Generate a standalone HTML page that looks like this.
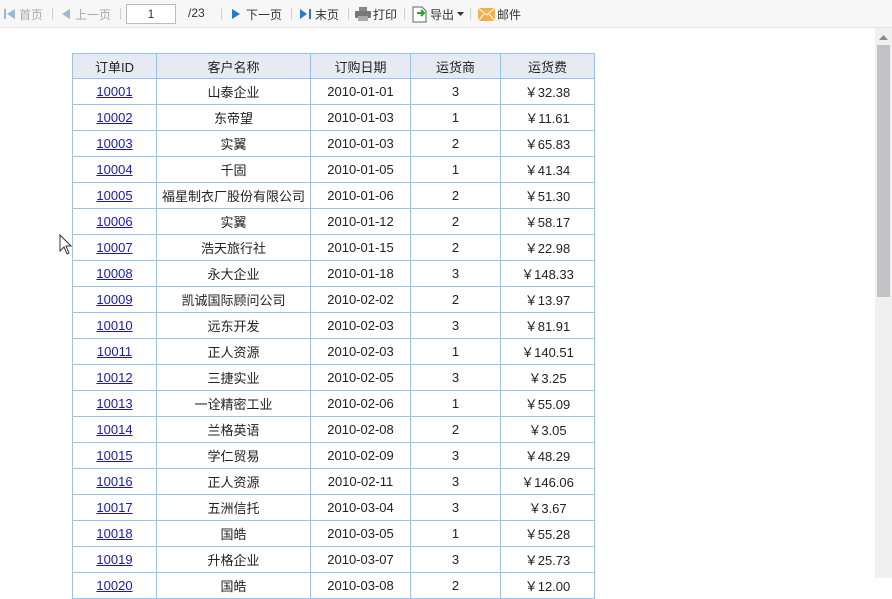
<!DOCTYPE html>
<html><head><meta charset="utf-8"><style>
*{margin:0;padding:0;box-sizing:border-box}
body{width:892px;height:578px;overflow:hidden;background:#fff;font-family:"Liberation Sans","Noto Sans CJK SC",sans-serif;position:relative}
#tb{position:absolute;left:0;top:0;width:892px;height:28px;background:#f7f7f7;border-bottom:1px solid #e3e3e3;font-size:12px;color:#333}
#tb span{position:absolute;top:6px;white-space:nowrap}
.g{color:#aaa}
.sep{color:#ccc}
#pg{position:absolute;left:126px;top:4px;width:50px;height:20px;border:1px solid #bbb;background:#fff;font-size:12px;text-align:center;line-height:18px}
table{position:absolute;left:72px;top:53px;border-collapse:collapse;font-size:13px;color:#222}
td{border:1px solid #9cc2ea;text-align:center;height:26px;padding:0}
tr.h td{background:#e6ebf3;height:25px}
a{color:#1a1aa8;text-decoration:underline}
#sb{position:absolute;left:875px;top:28px;width:17px;height:550px;background:#f0f0f0}
#th{position:absolute;left:877px;top:45px;width:13px;height:252px;background:#c1c1c6}
</style></head><body>
<div id="tb">
<svg style="position:absolute;left:4px;top:8px" width="12" height="12"><rect x="0" y="1" width="2" height="10" fill="#9bb8d8"/><path d="M11 1L3 6L11 11Z" fill="#9bb8d8"/></svg>
<span class="g" style="left:19px">首页</span><span class="sep" style="left:51px">|</span>
<svg style="position:absolute;left:61px;top:8px" width="10" height="12"><path d="M9 1L1 6L9 11Z" fill="#9bb8d8"/></svg>
<span class="g" style="left:75px">上一页</span><span class="sep" style="left:119px">|</span>
<div id="pg">1</div>
<span style="left:188px">/23</span><span class="sep" style="left:220px">|</span>
<svg style="position:absolute;left:231px;top:8px" width="10" height="12"><path d="M1 1L9 6L1 11Z" fill="#2a78c9"/></svg>
<span style="left:246px">下一页</span><span class="sep" style="left:290px">|</span>
<svg style="position:absolute;left:299px;top:8px" width="13" height="12"><path d="M1 1L8 6L1 11Z" fill="#2a78c9"/><rect x="10" y="1" width="2" height="10" fill="#2a78c9"/></svg>
<span style="left:315px">末页</span><span class="sep" style="left:347px">|</span>
<svg style="position:absolute;left:355px;top:7px" width="16" height="14"><rect x="4" y="0" width="8" height="4" fill="#888"/><rect x="0" y="4" width="16" height="7" rx="1" fill="#777"/><rect x="3" y="9" width="10" height="5" fill="#aaa"/></svg>
<span style="left:373px">打印</span><span class="sep" style="left:403px">|</span>
<svg style="position:absolute;left:412px;top:6px" width="16" height="17"><path d="M1 1H10L14 5V16H1Z" fill="#fff" stroke="#666"/><path d="M5 7H11M9 4L12 7L9 10" stroke="#2a2" stroke-width="2" fill="none"/></svg>
<span style="left:430px">导出</span>
<svg style="position:absolute;left:457px;top:12px" width="7" height="4"><path d="M0 0H7L3.5 4Z" fill="#333"/></svg>
<span class="sep" style="left:469px">|</span>
<svg style="position:absolute;left:478px;top:8px" width="17" height="13"><rect width="17" height="13" fill="#f0b050"/><path d="M0 0L8.5 7L17 0M0 13L6 6M17 13L11 6" stroke="#fff" fill="none"/></svg>
<span style="left:497px">邮件</span>
</div>
<table>
<colgroup><col style="width:84px"><col style="width:154px"><col style="width:100px"><col style="width:90px"><col style="width:94px"></colgroup>
<tr class="h"><td>订单ID</td><td>客户名称</td><td>订购日期</td><td>运货商</td><td>运货费</td></tr>
<tr><td><a>10001</a></td><td>山泰企业</td><td>2010-01-01</td><td>3</td><td>￥32.38</td></tr>
<tr><td><a>10002</a></td><td>东帝望</td><td>2010-01-03</td><td>1</td><td>￥11.61</td></tr>
<tr><td><a>10003</a></td><td>实翼</td><td>2010-01-03</td><td>2</td><td>￥65.83</td></tr>
<tr><td><a>10004</a></td><td>千固</td><td>2010-01-05</td><td>1</td><td>￥41.34</td></tr>
<tr><td><a>10005</a></td><td>福星制衣厂股份有限公司</td><td>2010-01-06</td><td>2</td><td>￥51.30</td></tr>
<tr><td><a>10006</a></td><td>实翼</td><td>2010-01-12</td><td>2</td><td>￥58.17</td></tr>
<tr><td><a>10007</a></td><td>浩天旅行社</td><td>2010-01-15</td><td>2</td><td>￥22.98</td></tr>
<tr><td><a>10008</a></td><td>永大企业</td><td>2010-01-18</td><td>3</td><td>￥148.33</td></tr>
<tr><td><a>10009</a></td><td>凯诚国际顾问公司</td><td>2010-02-02</td><td>2</td><td>￥13.97</td></tr>
<tr><td><a>10010</a></td><td>远东开发</td><td>2010-02-03</td><td>3</td><td>￥81.91</td></tr>
<tr><td><a>10011</a></td><td>正人资源</td><td>2010-02-03</td><td>1</td><td>￥140.51</td></tr>
<tr><td><a>10012</a></td><td>三捷实业</td><td>2010-02-05</td><td>3</td><td>￥3.25</td></tr>
<tr><td><a>10013</a></td><td>一诠精密工业</td><td>2010-02-06</td><td>1</td><td>￥55.09</td></tr>
<tr><td><a>10014</a></td><td>兰格英语</td><td>2010-02-08</td><td>2</td><td>￥3.05</td></tr>
<tr><td><a>10015</a></td><td>学仁贸易</td><td>2010-02-09</td><td>3</td><td>￥48.29</td></tr>
<tr><td><a>10016</a></td><td>正人资源</td><td>2010-02-11</td><td>3</td><td>￥146.06</td></tr>
<tr><td><a>10017</a></td><td>五洲信托</td><td>2010-03-04</td><td>3</td><td>￥3.67</td></tr>
<tr><td><a>10018</a></td><td>国皓</td><td>2010-03-05</td><td>1</td><td>￥55.28</td></tr>
<tr><td><a>10019</a></td><td>升格企业</td><td>2010-03-07</td><td>3</td><td>￥25.73</td></tr>
<tr><td><a>10020</a></td><td>国皓</td><td>2010-03-08</td><td>2</td><td>￥12.00</td></tr>
</table>
<svg style="position:absolute;left:59px;top:234px" width="14" height="22"><path d="M1 1V17L5 13L8 20L10 19L7 12H12Z" fill="#fff" stroke="#333"/></svg>
<div id="sb"></div>
<svg style="position:absolute;left:879px;top:35px" width="9" height="6"><path d="M0 5L4.5 0L9 5Z" fill="#888"/></svg>
<div id="th"></div>
</body></html>
